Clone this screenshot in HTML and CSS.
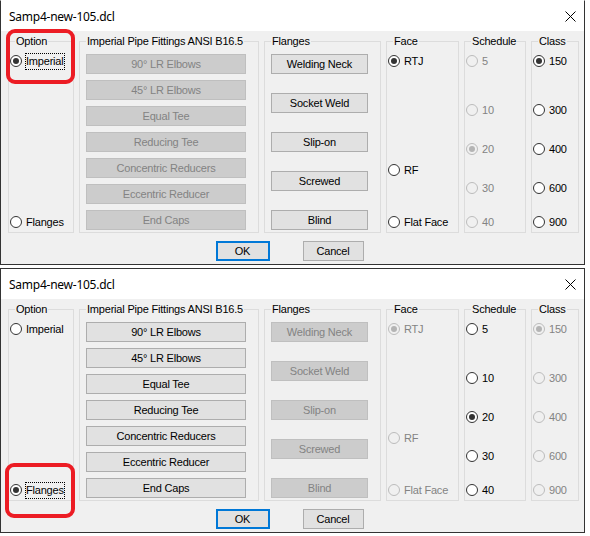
FILE: index.html
```html
<!DOCTYPE html>
<html lang="en">
<head>
    <meta charset="UTF-8">
    <meta name="viewport" content="width=device-width, initial-scale=1.0">
    <title>Samp4-new-105.dcl</title>
    <link rel="stylesheet" href="styles.css">
</head>
<body>

<!-- dialog with the Imperial option selected -->
<div class="window first">
    <div class="titlebar">
        <span class="title">Samp4-new-105.dcl</span>
        <svg class="close" width="11" height="11" viewBox="0 0 11 11"><path d="M0.5 0.5 L10.5 10.5 M10.5 0.5 L0.5 10.5" stroke="#000" stroke-width="1" fill="none"/></svg>
    </div>
    <div class="client">
        <div class="groups">
            <fieldset class="group option">
                <legend>Option</legend>
                <div class="radios">
                    <label class="radio r1 checked"><span class="ring"></span><span class="caption focus">Imperial</span></label>
                    <label class="radio r5"><span class="ring"></span><span class="caption">Flanges</span></label>
                </div>
            </fieldset>
            <fieldset class="group fittings">
                <legend>Imperial Pipe Fittings ANSI B16.5</legend>
                <div class="buttons">
                    <button class="btn" disabled>90° LR Elbows</button>
                    <button class="btn" disabled>45° LR Elbows</button>
                    <button class="btn" disabled>Equal Tee</button>
                    <button class="btn" disabled>Reducing Tee</button>
                    <button class="btn" disabled>Concentric Reducers</button>
                    <button class="btn" disabled>Eccentric Reducer</button>
                    <button class="btn" disabled>End Caps</button>
                </div>
            </fieldset>
            <fieldset class="group flanges">
                <legend>Flanges</legend>
                <div class="buttons wide-gap">
                    <button class="btn">Welding Neck</button>
                    <button class="btn">Socket Weld</button>
                    <button class="btn">Slip-on</button>
                    <button class="btn">Screwed</button>
                    <button class="btn">Blind</button>
                </div>
            </fieldset>
            <fieldset class="group face">
                <legend>Face</legend>
                <div class="radios">
                    <label class="radio r1 checked"><span class="ring"></span><span class="caption">RTJ</span></label>
                    <label class="radio rf"><span class="ring"></span><span class="caption">RF</span></label>
                    <label class="radio r5"><span class="ring"></span><span class="caption">Flat Face</span></label>
                </div>
            </fieldset>
            <fieldset class="group schedule">
                <legend>Schedule</legend>
                <div class="radios">
                    <label class="radio r1 disabled"><span class="ring"></span><span class="caption">5</span></label>
                    <label class="radio r2 disabled"><span class="ring"></span><span class="caption">10</span></label>
                    <label class="radio r3 disabled checked"><span class="ring"></span><span class="caption">20</span></label>
                    <label class="radio r4 disabled"><span class="ring"></span><span class="caption">30</span></label>
                    <label class="radio r5 disabled"><span class="ring"></span><span class="caption">40</span></label>
                </div>
            </fieldset>
            <fieldset class="group class">
                <legend>Class</legend>
                <div class="radios">
                    <label class="radio r1 checked"><span class="ring"></span><span class="caption">150</span></label>
                    <label class="radio r2"><span class="ring"></span><span class="caption">300</span></label>
                    <label class="radio r3"><span class="ring"></span><span class="caption">400</span></label>
                    <label class="radio r4"><span class="ring"></span><span class="caption">600</span></label>
                    <label class="radio r5"><span class="ring"></span><span class="caption">900</span></label>
                </div>
            </fieldset>
        </div>
        <div class="actions">
            <button class="btn ok">OK</button>
            <button class="btn cancel">Cancel</button>
        </div>
    </div>
    <div class="mark mark-imperial"></div>
</div>

<!-- dialog with the Flanges option selected -->
<div class="window">
    <div class="titlebar">
        <span class="title">Samp4-new-105.dcl</span>
        <svg class="close" width="11" height="11" viewBox="0 0 11 11"><path d="M0.5 0.5 L10.5 10.5 M10.5 0.5 L0.5 10.5" stroke="#000" stroke-width="1" fill="none"/></svg>
    </div>
    <div class="client">
        <div class="groups">
            <fieldset class="group option">
                <legend>Option</legend>
                <div class="radios">
                    <label class="radio r1"><span class="ring"></span><span class="caption">Imperial</span></label>
                    <label class="radio r5 checked"><span class="ring"></span><span class="caption focus">Flanges</span></label>
                </div>
            </fieldset>
            <fieldset class="group fittings">
                <legend>Imperial Pipe Fittings ANSI B16.5</legend>
                <div class="buttons">
                    <button class="btn">90° LR Elbows</button>
                    <button class="btn">45° LR Elbows</button>
                    <button class="btn">Equal Tee</button>
                    <button class="btn">Reducing Tee</button>
                    <button class="btn">Concentric Reducers</button>
                    <button class="btn">Eccentric Reducer</button>
                    <button class="btn">End Caps</button>
                </div>
            </fieldset>
            <fieldset class="group flanges">
                <legend>Flanges</legend>
                <div class="buttons wide-gap">
                    <button class="btn" disabled>Welding Neck</button>
                    <button class="btn" disabled>Socket Weld</button>
                    <button class="btn" disabled>Slip-on</button>
                    <button class="btn" disabled>Screwed</button>
                    <button class="btn" disabled>Blind</button>
                </div>
            </fieldset>
            <fieldset class="group face">
                <legend>Face</legend>
                <div class="radios">
                    <label class="radio r1 disabled checked"><span class="ring"></span><span class="caption">RTJ</span></label>
                    <label class="radio rf disabled"><span class="ring"></span><span class="caption">RF</span></label>
                    <label class="radio r5 disabled"><span class="ring"></span><span class="caption">Flat Face</span></label>
                </div>
            </fieldset>
            <fieldset class="group schedule">
                <legend>Schedule</legend>
                <div class="radios">
                    <label class="radio r1"><span class="ring"></span><span class="caption">5</span></label>
                    <label class="radio r2"><span class="ring"></span><span class="caption">10</span></label>
                    <label class="radio r3 checked"><span class="ring"></span><span class="caption">20</span></label>
                    <label class="radio r4"><span class="ring"></span><span class="caption">30</span></label>
                    <label class="radio r5"><span class="ring"></span><span class="caption">40</span></label>
                </div>
            </fieldset>
            <fieldset class="group class">
                <legend>Class</legend>
                <div class="radios">
                    <label class="radio r1 disabled checked"><span class="ring"></span><span class="caption">150</span></label>
                    <label class="radio r2 disabled"><span class="ring"></span><span class="caption">300</span></label>
                    <label class="radio r3 disabled"><span class="ring"></span><span class="caption">400</span></label>
                    <label class="radio r4 disabled"><span class="ring"></span><span class="caption">600</span></label>
                    <label class="radio r5 disabled"><span class="ring"></span><span class="caption">900</span></label>
                </div>
            </fieldset>
        </div>
        <div class="actions">
            <button class="btn ok">OK</button>
            <button class="btn cancel">Cancel</button>
        </div>
    </div>
    <div class="mark mark-flanges"></div>
</div>

</body>
</html>
```

FILE: styles.css
```css
body {
    margin: 0;
    background-color: #fff;
    font-family: "Liberation Sans", Arial, sans-serif;
    font-size: 11px;
    letter-spacing: -0.2px;
    color: #000;
}

.window {
    position: relative;
    width: 585px;
    box-sizing: border-box;
    border: 1px solid #333;
    background-color: #f0f0f0;
}

.window.first {
    border-top-color: #fff;
}

.window + .window {
    margin-top: 3px;
}

.titlebar {
    height: 30px;
    display: flex;
    align-items: center;
    justify-content: space-between;
    padding: 0 8px 0 8px;
    background-color: #fff;
}

.title {
    font-family: "Noto Sans", "Open Sans", sans-serif;
    font-size: 12px;
    letter-spacing: -0.25px;
}

.client {
    padding: 4px 0 3px 7px;
}

.groups {
    display: flex;
    gap: 5px;
}

/* group boxes */
.group {
    margin: 0;
    padding: 0;
    border: 1px solid #dcdcdc;
    box-sizing: border-box;
}

.group legend {
    margin-left: 6px;
    padding: 0 1px;
    line-height: 13px;
}

.option { width: 66px; }
.fittings { width: 180px; }
.flanges { width: 117px; }
.face { width: 73px; }
.schedule { width: 62px; }
.class { width: 48px; }

/* push buttons */
.buttons {
    display: flex;
    flex-direction: column;
    gap: 6px;
    padding: 6px 0 2px 6px;
}

.buttons.wide-gap {
    gap: 19px;
}

.btn {
    height: 20px;
    padding: 0;
    border: 1px solid #adadad;
    background-color: #e1e1e1;
    font-family: inherit;
    font-size: 11px;
    letter-spacing: -0.2px;
    color: #000;
}

.fittings .btn { width: 160px; }
.flanges .btn { width: 97px; }

.btn:disabled {
    background-color: #ccc;
    border-color: #bfbfbf;
    color: #838383;
}

/* radio columns, rows share fixed positions */
.radios {
    display: grid;
    grid-template-rows: [r1] 49px [r2] 39px [r3] 21px [rf] 18px [r4] 34px [r5] 14px;
    padding: 6px 0 3px 1px;
}

.r1 { grid-row: r1; }
.r2 { grid-row: r2; }
.r3 { grid-row: r3; }
.rf { grid-row: rf; }
.r4 { grid-row: r4; }
.r5 { grid-row: r5; }

.radio {
    display: flex;
    align-items: center;
    height: 14px;
    white-space: nowrap;
}

.ring {
    position: relative;
    flex: none;
    width: 12px;
    height: 12px;
    box-sizing: border-box;
    border: 1px solid #333;
    border-radius: 50%;
    background-color: #fff;
}

.checked .ring::after {
    content: "";
    position: absolute;
    left: 2px;
    top: 2px;
    width: 6px;
    height: 6px;
    border-radius: 50%;
    background-color: #333;
}

.caption {
    margin-left: 3px;
    padding: 1px 0;
    line-height: 13px;
    border: 1px dotted transparent;
}

.caption.focus {
    border-color: #000;
}

.disabled .ring {
    border-color: #bcbcbc;
    background-color: #f0f0f0;
}

.disabled.checked .ring::after {
    background-color: #b4b4b4;
}

.disabled .caption {
    color: #838383;
}

/* OK / Cancel */
.actions {
    display: flex;
    justify-content: center;
    gap: 33px;
    margin-top: 8px;
    padding-right: 13px;
}

.ok {
    width: 54px;
    border: 2px solid #0078d7;
}

.cancel {
    width: 61px;
}

/* red highlight around the selected option */
.mark {
    position: absolute;
    box-sizing: border-box;
    border: 4px solid #ec1c24;
    border-radius: 9px;
}

.mark-imperial {
    left: 5px;
    top: 28px;
    width: 69px;
    height: 55px;
}

.mark-flanges {
    left: 4px;
    top: 194px;
    width: 70px;
    height: 55px;
}
```
